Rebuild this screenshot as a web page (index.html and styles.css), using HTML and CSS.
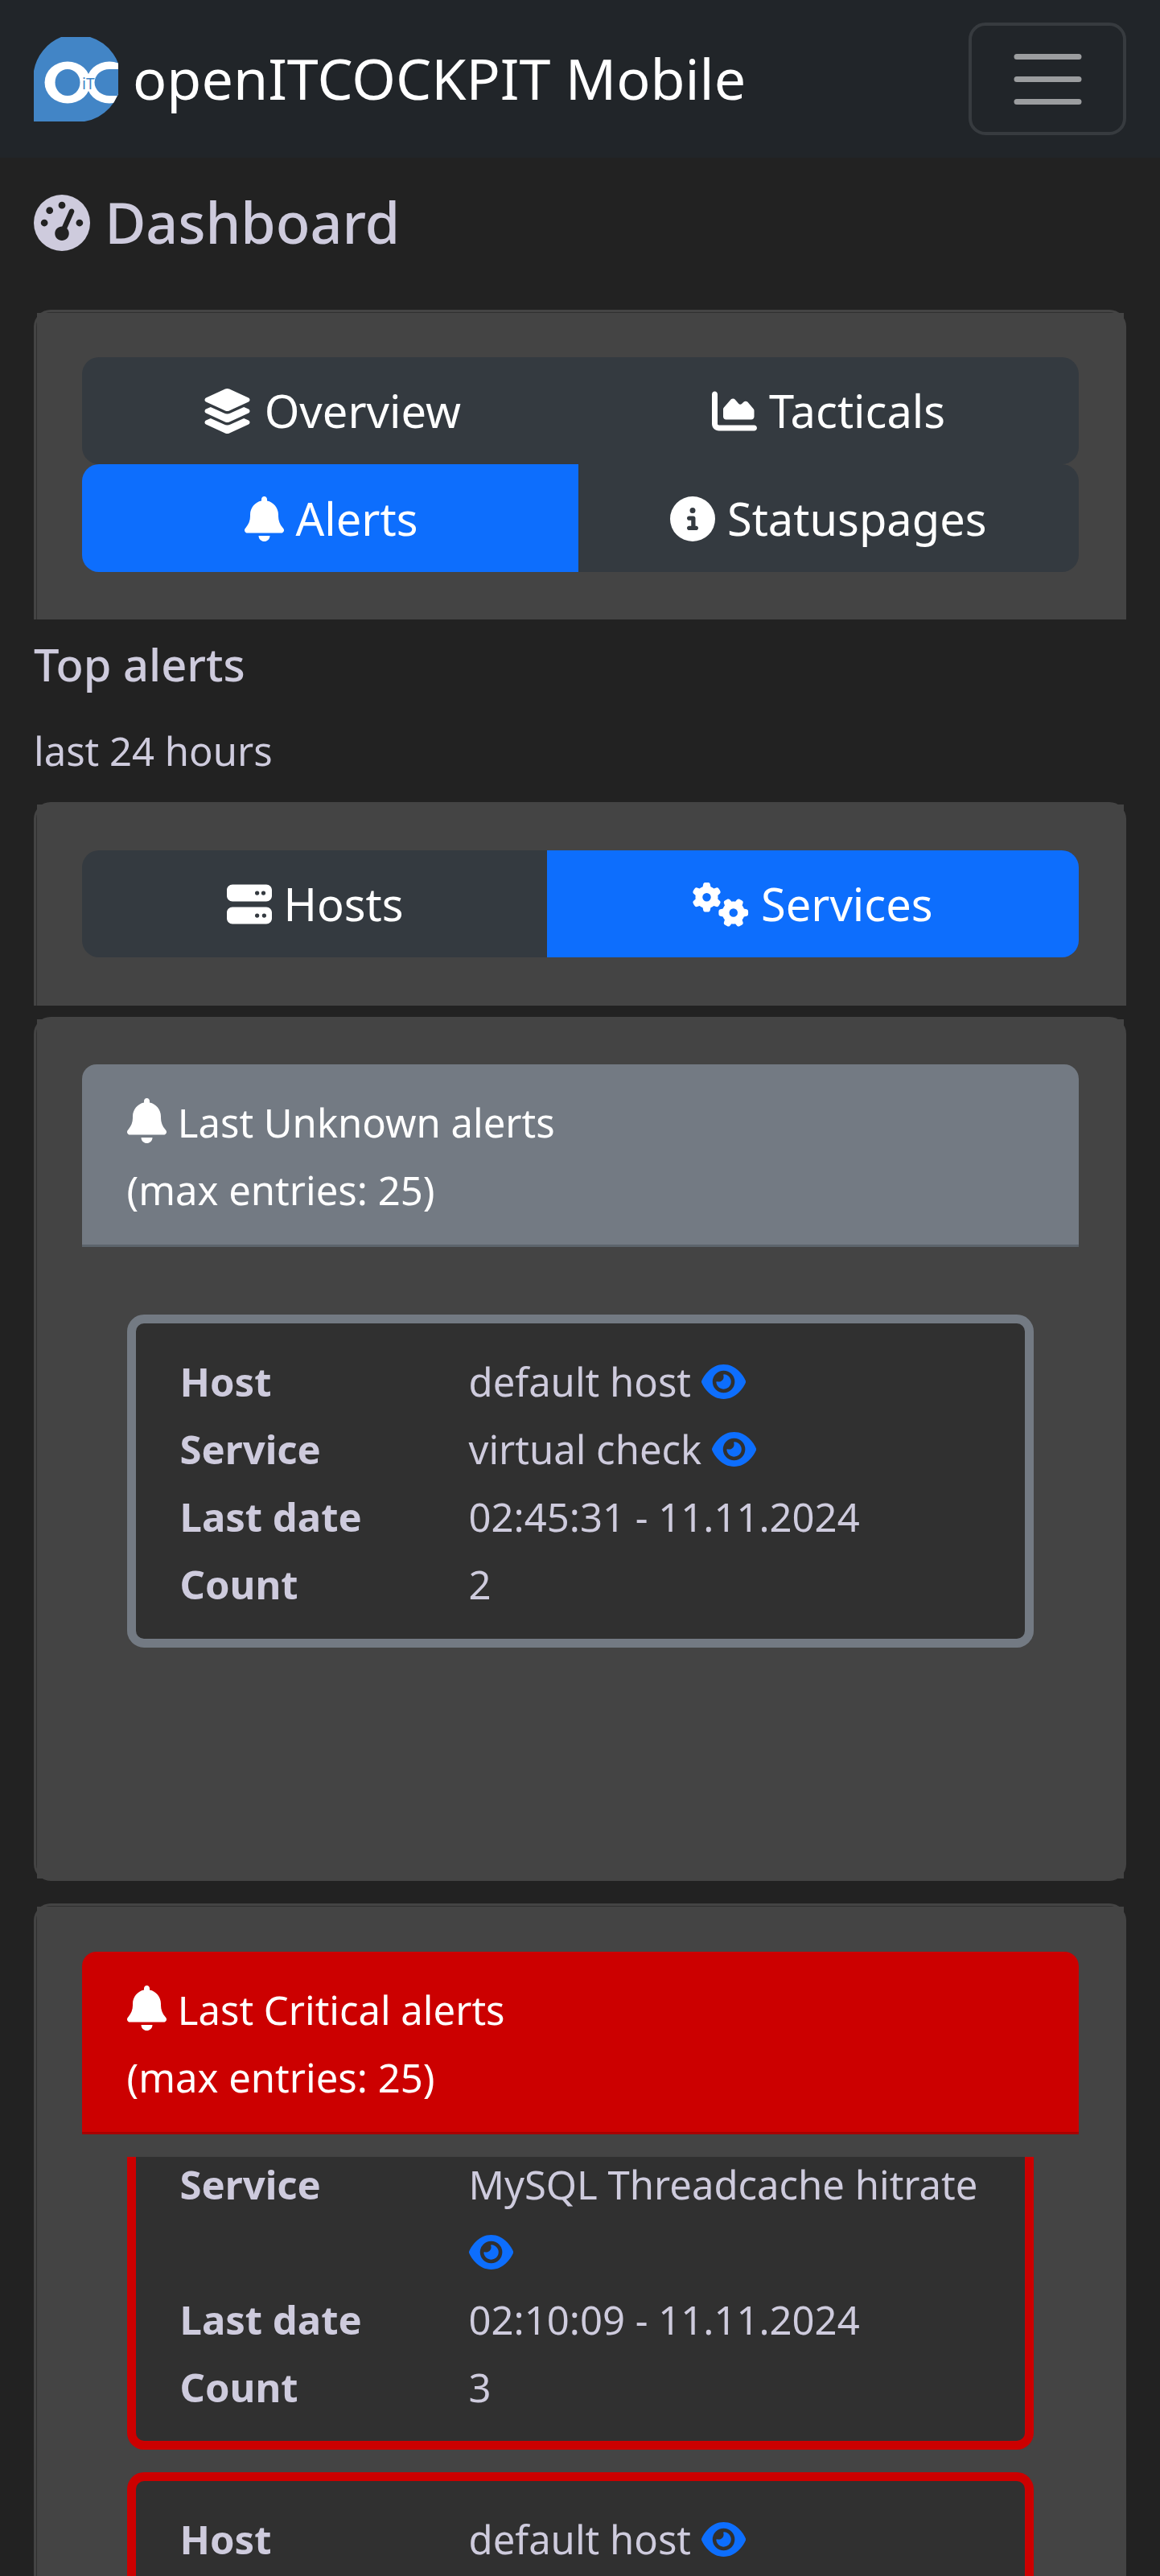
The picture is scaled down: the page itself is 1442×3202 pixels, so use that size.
FILE: index.html
```html
<!DOCTYPE html>
<html lang="en">
<head>
<meta charset="utf-8">
<title>openITCOCKPIT Mobile</title>
<link rel="stylesheet" href="styles.css">
</head>
<body>
<svg class="sprite" width="0" height="0" aria-hidden="true">
  <symbol id="gauge" viewBox="0 0 512 512"><path fill-rule="evenodd" d="M0 256a256 256 0 1 1 512 0A256 256 0 1 1 0 256zM288 96a32 32 0 1 0 -64 0 32 32 0 1 0 64 0zM256 416c35.300 0 64-28.700 64-64c0-17.400-6.900-33.100-18.100-44.600L366 161.700c5.300-12.100-.2-26.300-12.300-31.600s-26.300 .2-31.600 12.300L257.900 288c-.6 0-1.300 0-1.900 0c-35.300 0-64 28.700-64 64s28.700 64 64 64zM176 144a32 32 0 1 0 -64 0 32 32 0 1 0 64 0zM96 288a32 32 0 1 0 0-64 32 32 0 1 0 0 64zm352-32a32 32 0 1 0 -64 0 32 32 0 1 0 64 0z"/></symbol>
  <symbol id="layers" viewBox="0 0 576 512"><path d="M264.500 5.200c14.900-6.900 32.100-6.900 47 0l218.600 101c8.500 3.900 13.900 12.400 13.900 21.800s-5.400 17.900-13.900 21.800l-218.600 101c-14.900 6.900-32.100 6.900-47 0L45.900 149.800C37.400 145.800 32 137.300 32 128s5.400-17.900 13.900-21.800L264.500 5.200zM476.900 209.600l53.200 24.600c8.500 3.900 13.900 12.400 13.900 21.800s-5.400 17.900-13.900 21.800l-218.600 101c-14.900 6.900-32.100 6.900-47 0L45.900 277.800C37.400 273.800 32 265.300 32 256s5.400-17.900 13.900-21.800l53.200-24.600 152 70.200c23.400 10.800 50.400 10.800 73.800 0l152-70.200zm-152 198.200l152-70.200 53.200 24.600c8.500 3.900 13.900 12.400 13.900 21.800s-5.400 17.900-13.900 21.800l-218.600 101c-14.900 6.900-32.100 6.900-47 0L45.900 405.800C37.400 401.800 32 393.300 32 384s5.400-17.900 13.900-21.800l53.200-24.600 152 70.200c23.400 10.800 50.400 10.800 73.800 0z"/></symbol>
  <symbol id="chart" viewBox="0 0 512 512"><path d="M64 64c0-17.700-14.300-32-32-32S0 46.300 0 64L0 400c0 44.200 35.800 80 80 80l400 0c17.700 0 32-14.300 32-32s-14.300-32-32-32L80 416c-8.800 0-16-7.200-16-16L64 64zm96 288l288 0c17.700 0 32-14.300 32-32l0-68.200c0-7.600-2.700-15-7.700-20.800l-65.800-76.800c-12.100-14.200-33.700-15-46.900-1.800l-21 21c-10 10-26.400 9.200-35.400-1.600l-39.200-47c-12.600-15.100-35.700-15.400-48.700-.6L135.900 215c-5.100 5.800-7.900 13.300-7.900 21.100l0 84c0 17.700 14.300 32 32 32z"/></symbol>
  <symbol id="bell" viewBox="0 0 448 512"><path d="M224 0c-17.700 0-32 14.300-32 32l0 19.200C119 66 64 130.600 64 208l0 18.800c0 47-17.300 92.400-48.500 127.600l-7.400 8.300c-8.400 9.400-10.400 22.900-5.300 34.400S19.400 416 32 416l384 0c12.600 0 24-7.400 29.200-18.900s3.100-25-5.300-34.400l-7.400-8.300C401.300 319.200 384 273.900 384 226.800l0-18.800c0-77.400-55-142-128-156.800L256 32c0-17.700-14.300-32-32-32zm45.300 493.300c12-12 18.700-28.300 18.700-45.300l-64 0-64 0c0 17 6.700 33.300 18.700 45.300s28.300 18.700 45.300 18.700s33.300-6.700 45.300-18.700z"/></symbol>
  <symbol id="info" viewBox="0 0 512 512"><path fill-rule="evenodd" d="M256 512A256 256 0 1 0 256 0a256 256 0 1 0 0 512zM216 336l24 0 0-64-24 0c-13.300 0-24-10.700-24-24s10.700-24 24-24l48 0c13.300 0 24 10.700 24 24l0 88 8 0c13.300 0 24 10.700 24 24s-10.700 24-24 24l-80 0c-13.300 0-24-10.700-24-24s10.700-24 24-24zm40-208a32 32 0 1 1 0 64 32 32 0 1 1 0-64z"/></symbol>
  <symbol id="server" viewBox="0 0 512 512"><path fill-rule="evenodd" d="M64 32C28.700 32 0 60.700 0 96l0 64c0 35.300 28.700 64 64 64l384 0c35.300 0 64-28.700 64-64l0-64c0-35.300-28.700-64-64-64L64 32zm280 72a24 24 0 1 1 0 48 24 24 0 1 1 0-48zm48 24a24 24 0 1 1 48 0 24 24 0 1 1 -48 0zM64 288c-35.300 0-64 28.700-64 64l0 64c0 35.300 28.700 64 64 64l384 0c35.300 0 64-28.700 64-64l0-64c0-35.300-28.700-64-64-64L64 288zm280 72a24 24 0 1 1 0 48 24 24 0 1 1 0-48zm56 24a24 24 0 1 1 48 0 24 24 0 1 1 -48 0z"/></symbol>
  <symbol id="gears" viewBox="0 0 640 512"><path fill-rule="evenodd" d="M308.500 135.300c7.100-6.300 9.900-16.200 6.200-25c-2.300-5.300-4.800-10.500-7.600-15.500L304 89.400c-3-5-6.300-9.900-9.800-14.600c-5.700-7.600-15.700-10.100-24.700-7.100l-28.200 9.300c-10.700-8.800-23-16-36.200-20.900L199 27.100c-1.900-9.300-9.100-16.700-18.500-17.800C173.900 8.400 167.200 8 160.400 8l-.7 0c-6.800 0-13.500 .4-20.100 1.200c-9.400 1.100-16.600 8.600-18.500 17.800L115 56.100c-13.300 5-25.500 12.100-36.200 20.900L50.500 67.800c-9-3-19-.5-24.700 7.100c-3.500 4.700-6.800 9.600-9.900 14.600l-3 5.300c-2.800 5-5.300 10.200-7.600 15.600c-3.700 8.700-.9 18.600 6.200 25l22.200 19.800C32.600 161.900 32 168.900 32 176s.6 14.100 1.700 20.900L11.500 216.700c-7.100 6.300-9.900 16.200-6.200 25c2.300 5.300 4.800 10.500 7.600 15.600l3 5.200c3 5.100 6.300 9.900 9.900 14.600c5.700 7.600 15.700 10.100 24.700 7.100l28.200-9.300c10.700 8.800 23 16 36.200 20.900l6.100 29.100c1.900 9.300 9.100 16.700 18.500 17.800c6.700 .8 13.500 1.200 20.400 1.200s13.700-.4 20.400-1.200c9.400-1.100 16.600-8.600 18.500-17.800l6.100-29.100c13.300-5 25.500-12.100 36.200-20.900l28.200 9.300c9 3 19 .5 24.700-7.100c3.500-4.700 6.800-9.500 9.800-14.600l3.100-5.400c2.800-5 5.300-10.200 7.600-15.500c3.700-8.700 .9-18.600-6.200-25l-22.200-19.800c1.100-6.800 1.700-13.800 1.700-20.900s-.6-14.100-1.700-20.900l22.200-19.800zM112 176a48 48 0 1 1 96 0 48 48 0 1 1 -96 0zM504.700 500.500c6.300 7.100 16.200 9.900 25 6.200c5.300-2.300 10.500-4.800 15.500-7.600l5.400-3.100c5-3 9.900-6.300 14.600-9.800c7.600-5.700 10.100-15.700 7.100-24.700l-9.300-28.200c8.800-10.700 16-23 20.900-36.200l29.100-6.100c9.300-1.900 16.700-9.100 17.800-18.500c.8-6.700 1.200-13.500 1.200-20.400s-.4-13.700-1.200-20.400c-1.100-9.400-8.600-16.600-17.800-18.500L583.900 307c-5-13.300-12.100-25.500-20.900-36.200l9.300-28.200c3-9 .5-19-7.100-24.700c-4.700-3.500-9.600-6.800-14.600-9.900l-5.300-3c-5-2.800-10.200-5.300-15.600-7.600c-8.700-3.700-18.600-.9-25 6.200l-19.800 22.200c-6.800-1.100-13.800-1.700-20.900-1.700s-14.100 .6-20.900 1.700l-19.800-22.200c-6.300-7.100-16.200-9.900-25-6.200c-5.300 2.300-10.500 4.800-15.600 7.600l-5.200 3c-5.100 3-9.900 6.300-14.600 9.900c-7.600 5.700-10.100 15.700-7.100 24.700l9.300 28.200c-8.800 10.700-16 23-20.900 36.200L315.100 313c-9.300 1.900-16.700 9.100-17.800 18.500c-.8 6.700-1.200 13.500-1.200 20.400s.4 13.700 1.200 20.400c1.100 9.400 8.600 16.600 17.800 18.500l29.100 6.100c5 13.300 12.100 25.500 20.900 36.200l-9.300 28.200c-3 9-.5 19 7.100 24.700c4.700 3.500 9.500 6.800 14.600 9.800l5.400 3.100c5 2.800 10.200 5.300 15.500 7.600c8.700 3.700 18.600 .9 25-6.200l19.800-22.200c6.800 1.100 13.800 1.700 20.900 1.700s14.100-.6 20.900-1.700l19.800 22.200zM464 304a48 48 0 1 1 0 96 48 48 0 1 1 0-96z"/></symbol>
  <symbol id="eye" viewBox="0 0 576 512"><path fill-rule="evenodd" d="M288 32c-80.800 0-145.500 36.800-192.600 80.600C48.600 156 17.300 208 2.500 243.700c-3.300 7.900-3.300 16.700 0 24.600C17.300 304 48.600 356 95.400 399.400C142.500 443.200 207.200 480 288 480s145.500-36.800 192.600-80.600c46.800-43.500 78.100-95.400 93-131.100c3.300-7.900 3.300-16.700 0-24.600c-14.900-35.700-46.200-87.700-93-131.100C433.500 68.800 368.800 32 288 32zM144 256a144 144 0 1 1 288 0 144 144 0 1 1 -288 0zm144-64c0 35.300-28.700 64-64 64c-7.100 0-13.900-1.200-20.300-3.300c-5.500-1.800-11.900 1.600-11.700 7.400c.3 6.900 1.300 13.800 3.200 20.700c13.700 51.200 66.400 81.600 117.600 67.900s81.600-66.400 67.900-117.600c-11.100-41.500-47.800-69.400-88.600-71.100c-5.800-.2-9.200 6.100-7.400 11.700c2.100 6.400 3.300 13.200 3.300 20.300z"/></symbol>
</svg>

<nav class="navbar">
  <a class="brand">
    <svg class="logo" viewBox="0 0 105 105">
      <clipPath id="disc"><path d="M34 0H70A54 54 0 0 1 63 105H0V42A56 56 0 0 1 34 0z"/></clipPath>
      <g clip-path="url(#disc)">
        <rect width="105" height="105" fill="#4285c6"/>
        <ellipse cx="94" cy="56.500" rx="28.500" ry="26" fill="#fff"/>
        <path d="M94 40a18.500 16.500 0 0 0 0 33L106 73V40z" fill="#4285c6"/>
        <ellipse cx="42" cy="56.500" rx="28.500" ry="26" fill="#fff"/>
        <ellipse cx="42" cy="56.500" rx="15.500" ry="16.500" fill="#4285c6"/>
        <text class="logo-text" x="60" y="65">iT</text>
      </g>
    </svg>
    <span class="brand-name">openITCOCKPIT Mobile</span>
  </a>
  <button class="toggler" aria-label="Menu">
    <svg viewBox="0 0 30 30"><path d="M4 7h22M4 15h22M4 23h22"/></svg>
  </button>
</nav>

<main class="page">
  <h1 class="title"><svg class="icon sq"><use href="#gauge"/></svg> Dashboard</h1>

  <section class="card seam open tabs-card">
    <div class="card-inner">
      <div class="group">
        <button class="btn first overview"><svg class="icon wide"><use href="#layers"/></svg> Overview</button>
        <button class="btn last tacticals"><svg class="icon sq"><use href="#chart"/></svg> Tacticals</button>
      </div>
      <div class="group">
        <button class="btn first active alerts"><svg class="icon narrow"><use href="#bell"/></svg> Alerts</button>
        <button class="btn last"><svg class="icon sq"><use href="#info"/></svg> Statuspages</button>
      </div>
    </div>
  </section>

  <h2 class="subtitle">Top alerts</h2>
  <p class="period">last 24 hours</p>

  <section class="card open objects-card">
    <div class="card-inner">
      <div class="group">
        <button class="btn first hosts"><svg class="icon sq"><use href="#server"/></svg> Hosts</button>
        <button class="btn last active"><svg class="icon xwide"><use href="#gears"/></svg> Services</button>
      </div>
    </div>
  </section>

  <section class="card unknown">
    <div class="card-inner">
      <header class="state-head"><svg class="icon narrow"><use href="#bell"/></svg> Last Unknown alerts<br>(max entries: 25)</header>
      <div class="list">
        <dl class="item">
          <dt>Host</dt><dd>default host <svg class="icon eye"><use href="#eye"/></svg></dd>
          <dt>Service</dt><dd>virtual check <svg class="icon eye"><use href="#eye"/></svg></dd>
          <dt>Last date</dt><dd>02:45:31 - 11.11.2024</dd>
          <dt>Count</dt><dd>2</dd>
        </dl>
      </div>
    </div>
  </section>

  <section class="card seam open critical">
    <div class="card-inner">
      <header class="state-head"><svg class="icon narrow"><use href="#bell"/></svg> Last Critical alerts<br>(max entries: 25)</header>
      <div class="list">
        <dl class="item scrolled">
          <dt>Service</dt><dd>MySQL Threadcache hitrate <svg class="icon eye"><use href="#eye"/></svg></dd>
          <dt>Last date</dt><dd>02:10:09 - 11.11.2024</dd>
          <dt>Count</dt><dd>3</dd>
        </dl>
        <dl class="item cut">
          <dt>Host</dt><dd>default host <svg class="icon eye"><use href="#eye"/></svg></dd>
        </dl>
      </div>
    </div>
  </section>
</main>
</body>
</html>
```

FILE: styles.css
```css
* { box-sizing: border-box; }

html { background: #222; }

body {
  margin: 0;
  background: #222;
  color: #cecbdd;
  font: 49px/84px "Noto Sans", sans-serif;
}

.sprite { display: none; }

button {
  margin: 0;
  padding: 0;
  border: 0;
  font-family: inherit;
}

/* Icons: sized in em of their own font size */
.icon {
  height: 1em;
  vertical-align: -0.125em;
  fill: currentColor;
}
.sq { width: 1em; }
.wide, .eye { width: 1.125em; }
.xwide { width: 1.25em; }
.narrow { width: 0.875em; }
.eye { color: #0d6efd; }

/* Navbar */
.navbar {
  display: flex;
  align-items: center;
  justify-content: space-between;
  height: 196px;
  padding: 0 42px;
  background: #212529;
}
.brand {
  display: flex;
  align-items: center;
  gap: 18px;
  color: #fff;
}
.logo { width: 105px; height: 105px; }
.logo-text {
  fill: #4285c6;
  font: 19px "Noto Sans", sans-serif;
}
.brand-name { margin-bottom: 2px; font-size: 70px; line-height: 98px; }
.toggler {
  display: flex;
  align-items: center;
  justify-content: center;
  width: 196px;
  height: 140px;
  border: 4px solid #373b3f;
  border-radius: 21px;
  background: none;
}
.toggler svg {
  width: 105px;
  height: 105px;
  fill: none;
  stroke: #9b9d9f;
  stroke-width: 2;
  stroke-linecap: round;
}

.page { padding: 0 42px; }

.title {
  margin: 0;
  height: 189px;
  padding-top: 38px;
  font-size: 70px;
  font-weight: 500;
  line-height: 84px;
}
.subtitle {
  margin: 22px 0 32px;
  font-size: 56px;
  font-weight: 500;
  line-height: 67px;
}
.period { margin: 0 0 22px; }

/* Cards: rounded frame round a square-cornered panel */
.card {
  border: 3px solid #444;
  border-radius: 21px;
  padding-left: 1px;
  background: #303030;
}
.card.seam { padding-top: 1px; }
.card.open {
  border-bottom: 0;
  border-radius: 21px 21px 0 0;
}
.card-inner {
  height: 100%;
  padding: 56px 56px 0 55.5px;
  background: #444;
}
.tabs-card { height: 385px; }
.tabs-card .card-inner { padding-top: 55px; }
.objects-card { height: 253px; margin-bottom: 14px; }
.objects-card .card-inner { padding-top: 57px; }
.unknown { height: 1074px; margin-bottom: 28px; }
.critical { height: 836px; }

/* Button groups */
.group { display: flex; }
.btn {
  flex: 1 1 0;
  height: 133px;
  background: #343a40;
  color: #fff;
  font-size: 56px;
  line-height: 133px;
  white-space: nowrap;
}
.group + .group .btn { height: 134px; }
.btn.active { background: #0d6efd; }
.btn.first { border-radius: 21px 0 0 21px; }
.btn.last { border-radius: 0 21px 21px 0; }
.btn.overview { flex: 0 0 621px; }
.btn.tacticals { margin-left: -3px; }
.btn.alerts { flex: 0 0 617.5px; padding-left: 3px; }
.btn.hosts { flex: 0 0 578.5px; padding-left: 2px; }

/* Alert lists */
.state-head {
  height: 227px;
  padding: 30px 56px 0;
  border-radius: 18px 18px 0 0;
  color: #fff;
}
.state-head .icon { margin-right: 1.5px; font-size: 56px; }
.unknown .state-head { background: #737a83; border-bottom: 3px solid #5c646c; }
.critical .state-head { background: #c00; border-bottom: 3px solid #a80000; }

.list {
  margin-top: 28px;
  padding: 56px 56px 0;
}
.critical .list {
  height: 521px;
  padding-top: 0;
  overflow: hidden;
}

.item {
  display: grid;
  grid-template-columns: 359px 1fr;
  margin: 0 0 28px;
  padding: 30px 55px 26px;
  border: 11px solid;
  border-radius: 21px;
  background: #303030;
}
.unknown .item { border-color: #737a83; }
.critical .item { border-color: #c00; }
.item dt { font-weight: 700; }
.item dd { margin: 0; color: inherit; }

/* First entry, scrolled part of the way out of the list */
.item.scrolled {
  height: 364px;
  padding-top: 0;
  border-top: 0;
  border-radius: 0 0 21px 21px;
}
.item.scrolled > :nth-child(-n+2) { margin-top: -8px; }

/* Last entry, running off the end of the list */
.item.cut {
  height: 129px;
  margin-bottom: 0;
  padding-bottom: 0;
  border-bottom: 0;
  border-radius: 21px 21px 0 0;
}
```
